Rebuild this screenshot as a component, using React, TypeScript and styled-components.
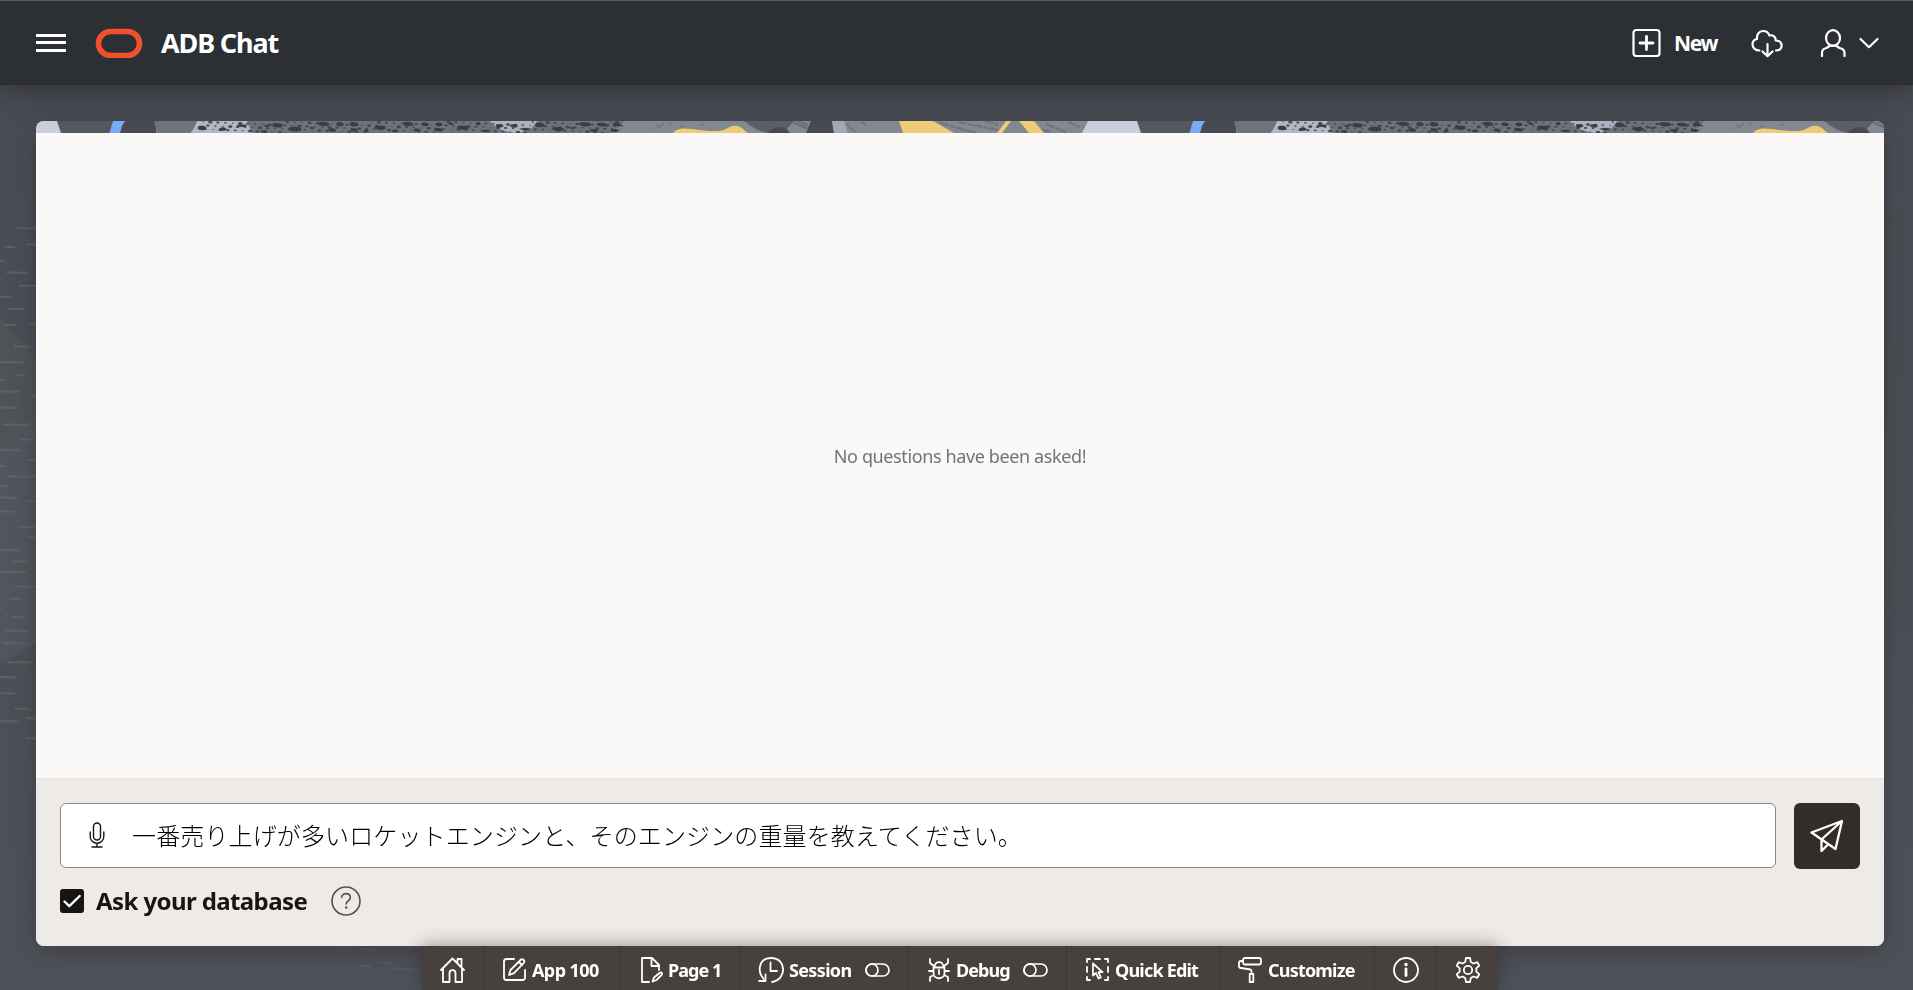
import React from 'react';
import styled, { createGlobalStyle } from 'styled-components';

const GlobalStyle = createGlobalStyle`
  * { box-sizing: border-box; }
  html, body { margin: 0; padding: 0; }
  body {
    font-family: "Noto Sans", "Noto Sans CJK JP", sans-serif;
    background: #4b4e57;
    overflow: hidden;
  }
  button { font: inherit; color: inherit; background: none; border: 0; padding: 0; }
`;

const Page = styled.div`
  position: relative;
  isolation: isolate;
  height: 100vh;
  display: flex;
  flex-direction: column;
  background: linear-gradient(#494b53, #4a4d56 30%, #4e5159);
`;

const Backdrop = styled.svg`
  position: absolute;
  inset: 0;
  z-index: -1;
`;

const Header = styled.header`
  flex: none;
  height: 85px;
  padding: 0 34px 0 36px;
  display: flex;
  align-items: center;
  border-top: 1px solid #565656;
  background: #2c2f33;
  border-bottom: 1px solid #292b2e;
  box-shadow: 0 8px 24px -2px rgba(40, 40, 38, 0.65);
  color: #fff;
`;

const MenuButton = styled.button`
  display: flex;
  flex-direction: column;
  width: 30px;
  height: 18px;
  justify-content: space-between;
`;

const MenuBar = styled.span`
  height: 3px;
  background: #fff;
`;

const Brand = styled.div`
  display: flex;
  align-items: center;
  margin-left: 29px;
  gap: 18px;
  flex: 1;
`;

const Title = styled.h1`
  margin: 0;
  font-size: 27px;
  font-weight: 700;
  letter-spacing: -1.15px;
  line-height: 36px;
`;

const NavButton = styled.button<{ $gap?: number; $after?: number }>`
  display: flex;
  align-items: center;
  gap: ${(p) => p.$gap ?? 0}px;
  margin-right: ${(p) => p.$after ?? 0}px;
`;

const NavLabel = styled.span`
  width: 43px;
  font-size: 21px;
  font-weight: 700;
  letter-spacing: -1.3px;
  line-height: 28px;
  padding-top: 1px;
`;

const Glyph = styled.svg<{ $w?: number }>`
  display: block;
  flex: none;
  fill: none;
  stroke: currentColor;
  stroke-width: ${(p) => p.$w ?? 2.2};
  stroke-linecap: round;
  stroke-linejoin: round;
`;

const Panel = styled.main`
  flex: none;
  height: 825px;
  margin: 36px 29px 0 36px;
  display: flex;
  flex-direction: column;
  border-radius: 8px;
  overflow: hidden;
  background: #fbf9f8;
  box-shadow: 0 6px 24px -2px rgba(48, 45, 40, 0.55);
`;

const Strip = styled.svg`
  display: block;
  flex: none;
`;

const Messages = styled.section`
  flex: 1;
  display: flex;
  align-items: center;
  justify-content: center;
  color: #757371;
  font-size: 18px;
  letter-spacing: -0.38px;
`;

const Composer = styled.form`
  flex: none;
  height: 168px;
  padding: 24px 24px 0;
  border-top: 1px solid #e4e3e1;
  background: #eeeae7;
`;

const InputRow = styled.div`
  display: flex;
  gap: 18px;
  height: 66px;
`;

const Field = styled.div`
  flex: 1;
  height: 65px;
  display: flex;
  align-items: center;
  padding-left: 28px;
  gap: 27px;
  background: #fff;
  border: 1px solid #8b8886;
  border-radius: 6px;
  color: #161513;
`;

const Question = styled.span`
  font-family: "Noto Sans CJK JP", sans-serif;
  font-size: 24px;
  font-weight: 300;
  color: #000;
  letter-spacing: 0.13px;
  white-space: nowrap;
  padding-bottom: 3px;
`;

const SendButton = styled.button`
  width: 66px;
  height: 66px;
  display: flex;
  align-items: center;
  justify-content: center;
  border-radius: 6px;
  background: #312d2a;
  color: #fff;
`;

const OptionRow = styled.div`
  display: flex;
  align-items: center;
  height: 30px;
  margin-top: 17px;
`;

const CheckBox = styled.span`
  width: 24px;
  height: 24px;
  border-radius: 3px;
  background: #161513;
  color: #fff;
`;

const OptionLabel = styled.label`
  width: 247px;
  padding-left: 12px;
  color: #161513;
  font-size: 24px;
  font-weight: 700;
  line-height: 30px;
  white-space: nowrap;
  letter-spacing: -0.6px;
`;

const Help = styled.span`
  color: #55504c;
`;

const DevBar = styled.nav`
  flex: none;
  width: 1076px;
  height: 44px;
  margin-left: 422px;
  display: flex;
  background: #47413d;
  box-shadow: 0 0 18px rgba(30, 28, 25, 0.45);
  color: #fff;
`;

const DevItem = styled.button<{ $width: number; $pad?: number; $gap?: number }>`
  flex: none;
  width: ${(p) => p.$width}px;
  padding-left: ${(p) => p.$pad ?? 18}px;
  padding-top: 3px;
  display: flex;
  align-items: center;
  gap: ${(p) => p.$gap ?? 5}px;
  border-right: 1px solid #3b3633;
  &:last-child { border-right: 0; }
`;

const DevLabel = styled.span<{ $width?: number; $track?: number }>`
  width: ${(p) => (p.$width ? `${p.$width}px` : 'auto')};
  padding-top: 1px;
  font-size: 18px;
  font-weight: 700;
  line-height: 24px;
  text-align: left;
  white-space: nowrap;
  letter-spacing: ${(p) => p.$track ?? -0.95}px;
`;

/* Brush dashes down the left edge: [x1, x2, y]; x in thirds of a pixel, y in steps of 1/2.8 pixel. */
const dashes = [
  [52, 108, 79], [16, 42, 131], [82, 108, 124], [0, 12, 170], [22, 82, 203], [58, 106, 240],
  [0, 32, 271], [24, 70, 304], [10, 44, 349], [93, 108, 348], [44, 88, 410], [0, 68, 454],
  [50, 73, 490], [0, 12, 503], [0, 56, 536], [95, 108, 548], [0, 50, 581], [10, 86, 629],
  [62, 100, 670], [0, 60, 700], [82, 108, 728], [0, 12, 744], [26, 108, 774], [0, 18, 801],
  [0, 50, 833], [84, 108, 843], [0, 42, 872], [58, 108, 916], [82, 108, 943], [0, 62, 980],
  [38, 84, 1012], [0, 76, 1042], [48, 108, 1082], [32, 62, 1117], [0, 5, 1143], [38, 73, 1167],
  [14, 82, 1206], [10, 76, 1241], [26, 94, 1294], [0, 46, 1336], [0, 42, 1381], [46, 86, 1424],
  [80, 108, 1451], [4, 50, 1459], [80, 108, 1507],
];

const lowerDashes = [
  [333, 352, 947], [364, 378, 949], [402, 420, 947], [361, 371, 966], [380, 391, 963], [394, 420, 969],
];

/* Large pebbles of the banner texture: [cx, cy, rx, ry]. */
const pebbles = [
  [202, 7, 4, 2], [223, 8, 3, 1.7], [242, 4.7, 4.5, 1.3], [277.5, 4.3, 5, 2], [295, 8, 6, 2.3],
  [323.5, 3, 5.8, 2], [340, 3.3, 3.5, 2], [354, 3.3, 4.2, 2], [332, 9, 3.5, 1.7], [354, 9, 3.5, 1.6],
  [380, 6.7, 5.4, 2], [408, 3, 5.4, 2], [425, 3.3, 3.5, 1.7], [439, 3.3, 3.5, 1.7], [417, 9, 3.2, 1.4],
  [438.5, 8.7, 4.2, 1.6], [463, 6.7, 5.6, 2], [499.6, 4.7, 3.6, 1.6], [514, 5, 3.6, 1.6], [524.6, 8.3, 3, 1.3],
  [539.6, 4, 4.2, 2], [558, 8, 5.6, 2], [585, 3.3, 5.6, 2], [602, 3.6, 4.8, 1.7], [617, 3.6, 4, 1.6],
  [614.6, 9.6, 3.6, 1.4], [594, 9.6, 3.6, 1.4], [267, 5, 2.4, 1.2], [264, 10.5, 3, 1.3], [312, 7, 2, 1],
  [366, 10, 2.4, 1.1], [395, 10, 3, 1.2], [451, 2.8, 2.4, 1.1], [478, 3, 2.5, 1.1], [485, 10, 3, 1.2], [572, 7, 2, 1],
];

const grit = Array.from({ length: 170 }, (_, i) => [203 + i * 2.48, 0.8 + ((i * 7.31) % 10.8), 0.7 + (i % 4) * 0.32]);

const BannerTile = ({ x }: { x: number }) => (
  <g transform={`translate(${x} 0)`}>
    <rect x="0" width="1082" height="12" fill="#838990" />
    <path d="M55 0H116V12H55Z" fill="#535861" />
    <path d="M2 12 8 0H57L61 12Z" fill="#c8cedb" />
    <path d="M120 0H156V12H114Z" fill="#474a53" />
    <path d="M113 0H125C122 4 121 8 120 12H109.500Z" fill="#79acf7" />
    <path d="M154 0H198V12H157Z" fill="#6e747e" />
    <path d="M197 0H248L253 12H190.500C194 8 195 5 197 0Z" fill="#b0b8c5" />
    <path d="M247 0H625L612 12H252Z" fill="#6d737d" />
    <path d="M490 0H537C534 6 528 11 516 12C503 11 494 6 490 0Z" fill="#abb3c1" />
    {grit.map(([cx, cy, r], i) => <ellipse key={i} cx={cx} cy={cy} rx={r * 1.25} ry={r * 0.8} fill="#44484d" />)}
    {pebbles.map(([cx, cy, rx, ry], i) => <ellipse key={i} cx={cx} cy={cy} rx={rx * 1.08} ry={ry * 1.08} fill="#3b3e42" transform={`rotate(4 ${cx} ${cy})`} />)}
    <path d="M655 8l3-5 2 3 4-4M668 2l4 2M680 5l5 1M700 3l3 1" stroke="#6d727a" strokeWidth="1.200" fill="none" />
    <path d="M673 12C677 7 684 7 692 8C705 10 717 11 724 9C730 6 732 4 738 5C743 7 745 10 748 12Z" fill="#efcb78" />
    <path d="M744 0H794C789 5 786 10 781 12H768C758 10 750 5 744 0Z" fill="#5b5e67" />
    <path d="M768 12C773 5 785 4 790 12Z" fill="#474a53" />
    <path d="M793 1 809 8M798 0 808 4" stroke="#6b7079" strokeWidth="2.500" />
    <path d="M811 0H832L834 12H806Z" fill="#474a53" />
    <path d="M832 0H844L848 12H834Z" fill="#a1a8b6" />
    <path d="M847 3l8 8M861 1l5 3" stroke="#6d727a" strokeWidth="1.500" />
    <path d="M940 2 976 12M958 1 998 9M985 0l13 4M1046 3l20 8M1068 1l12 5M1042 9l8 2" stroke="#70757e" strokeWidth="2.500" strokeDasharray="9 1 5 1" />
    <path d="M899 0H933L954 12H903Z" fill="#efcb78" />
    <path d="M1006 0H1011L1002 12H997ZM1019 0H1034L1044 12H1029Z" fill="#efcb78" />
  </g>
);

const ToggleGlyph = () => (
  <Glyph width="25" height="14" viewBox="0 0 25 14" $w={1.7}>
    <rect x="1" y="1" width="23" height="12" rx="6" /><circle cx="7" cy="7" r="6" />
  </Glyph>
);

export default function App() {
  return (
    <Page>
      <GlobalStyle />
      <Backdrop width="1913" height="990" viewBox="0 0 1913 990">
        <path d="M0 318 36 360V413L0 446Z" fill="#505356" />
        <path d="M0 446 36 413V643L0 664Z" fill="#52555d" />
        <path d="M1884 210H1913V640L1884 600Z" fill="#484b52" opacity="0.500" />
        <path d="M1884 838Q1900 844 1913 844V846Q1900 846 1884 840Z" fill="#4b4d50" opacity="0.600" />
        <g stroke="#64666a" strokeWidth="2.200" strokeLinecap="round" opacity="0.750">
          {dashes.map(([a, b, y], i) => <path key={i} d={`M${a / 3} ${200 + y / 2.8}L${b / 3} ${200.3 + y / 2.8}`} />)}
          {lowerDashes.map(([a, b, y], i) => <path key={i} d={`M${a} ${y}L${b} ${y + 0.5}`} opacity="0.600" />)}
        </g>
      </Backdrop>

      <Header>
        <MenuButton aria-label="Menu"><MenuBar /><MenuBar /><MenuBar /></MenuButton>
        <Brand>
          <Glyph width="48" height="30" viewBox="0 0 48 30" $w={5.6} color="#f1502f">
            <rect x="3.500" y="3.500" width="41" height="24" rx="12" />
          </Glyph>
          <Title>ADB Chat</Title>
        </Brand>
        <NavButton $gap={13} $after={34}>
          <Glyph width="29" height="29" viewBox="0 0 29 29">
            <path d="M4.500 2H24.500Q27.500 2 27.500 5V25Q27.500 28 24.500 28H4.500Q1.500 28 1.500 25V5Q1.500 2 4.500 2Z" />
            <path d="M14.500 8.500v13M8 15h13" strokeWidth="2.800" />
          </Glyph>
          <NavLabel>New</NavLabel>
        </NavButton>
        <NavButton aria-label="Install" $after={36}>
          <Glyph width="32" height="30" viewBox="0 -1 32 30">
            <path d="M8.500 21.500C4 21.500 1.500 18.500 1.500 15.500c0-3 2-5 4.500-5.500C5.500 5.500 8 2 12 2c3 0 5.500 1.800 6.300 4.500 3.700-1 6.700 1.500 6.400 5 3.500 0 6 2 6 5 0 3-2.300 5-5.700 5" />
            <path d="M16.500 15v12M11.500 22.500l5 4.800 5-4.800" />
          </Glyph>
        </NavButton>
        <NavButton aria-label="Account" $gap={12}>
          <Glyph width="28" height="28" viewBox="0 0 28 28">
            <ellipse cx="14" cy="9" rx="7" ry="7.800" />
            <path d="M3 27v-3c0-3 2-4.500 4.500-5L10.500 17l3.500-.5 3.500.5 3 2C23 19.500 25.500 21 25.500 24v3" />
          </Glyph>
          <Glyph width="20" height="12" viewBox="0 0 20 12"><path d="M1.500 2 10 10.200 18.500 2" /></Glyph>
        </NavButton>
      </Header>

      <Panel>
        <Strip width="1848" height="12" viewBox="36 0 1848 12">
          <BannerTile x={0} />
          <BannerTile x={1080} />
        </Strip>
        <Messages>No questions have been asked!</Messages>
        <Composer>
          <InputRow>
            <Field>
              <Glyph width="16" height="27" viewBox="0 0 16 27" $w={1.4}>
                <rect x="4.500" y="1" width="7" height="17" rx="3.500" />
                <path d="M1.200 10v4.500a6.800 6.800 0 0 0 13.600 0V10M8 21.500V25M3 25h10" />
              </Glyph>
              <Question>一番売り上げが多いロケットエンジンと、そのエンジンの重量を教えてください。</Question>
            </Field>
            <SendButton type="button" aria-label="Send">
              <Glyph width="34" height="34" viewBox="0 0 34 34" $w={2.3}>
                <path d="M32 2 1.500 13.500 25.500 30ZM32 2 11.500 20.500V32L18 25.500" />
              </Glyph>
            </SendButton>
          </InputRow>
          <OptionRow>
            <CheckBox>
              <Glyph width="24" height="24" viewBox="0 0 24 24" $w={2.4}><path d="M4.500 12.500 9.300 17.200 19.700 7" /></Glyph>
            </CheckBox>
            <OptionLabel>Ask your database</OptionLabel>
            <Help>
              <Glyph width="30" height="30" viewBox="0 0 30 30" $w={1.6}>
                <circle cx="15" cy="15" r="14" />
                <path d="M10.700 11.500c0-2.400 1.900-3.900 4.400-3.900s4.200 1.600 4.200 3.800c0 3.600-4.100 3.400-4.100 6.600" />
                <circle cx="15.200" cy="21.500" r=".5" />
              </Glyph>
            </Help>
          </OptionRow>
        </Composer>
      </Panel>

      <DevBar>
        <DevItem $width={62} aria-label="Home">
          <Glyph width="25" height="26" viewBox="0 0 25 26" $w={1.8}>
            <path d="M1 13 12.500 1.500 24 13M3 11.500V25h6.500v-9c0-3.800 6-3.800 6 0v9H22V11.500M17.500 6V2h4v8.500" />
          </Glyph>
        </DevItem>
        <DevItem $width={136} $pad={19} $gap={6}>
          <Glyph width="23" height="23" viewBox="0 0 23 23" $w={1.8}>
            <path d="M11 1H3.500Q1 1 1 3.500V19.500Q1 22 3.500 22H19.500Q22 22 22 19.500V12M6 17l1.500-5L17.500 2c2-2 5 1 3.200 3L11 15.200ZM16 4l3 3" />
          </Glyph>
          <DevLabel $track={-0.6}>App 100</DevLabel>
        </DevItem>
        <DevItem $width={121} $pad={21} $gap={5}>
          <Glyph width="22" height="26" viewBox="0 0 22 26" $w={1.8}>
            <path d="M8 25H1V1H11L18 8V13M10.500 1V9H18M11.500 24.500l1.500-4 5.500-4.500c1.800-1.200 3.300.5 2 2L15.500 23Z" />
          </Glyph>
          <DevLabel>Page 1</DevLabel>
        </DevItem>
        <DevItem $width={167} $pad={17}>
          <Glyph width="26" height="26" viewBox="0 0 26 26" $w={1.8}>
            <path d="M7.500 24V17.500M7.500 24H1.200M7 23C-2 15 1 1 13 1c16 0 16 22 1 24M12.500 5.500V14H19" />
          </Glyph>
          <DevLabel $width={71} $track={-0.65}>Session</DevLabel>
          <ToggleGlyph />
        </DevItem>
        <DevItem $width={159} $pad={20} $gap={6}>
          <Glyph width="22" height="24" viewBox="0 0 22 24" $w={1.8}>
            <path d="M5.500 9.500H16.500V15c0 7-11 7-11 0ZM6.500 9c0-6.500 9-6.500 9 0M2 1v4l4 3M20 1v4l-4 3M1 13h4.500M21 13h-4.500M2 23v-4l4-2M20 23v-4l-4-2M11 12v4" />
          </Glyph>
          <DevLabel $width={61}>Debug</DevLabel>
          <ToggleGlyph />
        </DevItem>
        <DevItem $width={153} $pad={19} $gap={6}>
          <Glyph width="23" height="23" viewBox="0 0 23 23" $w={1.8}>
            <path d="M4 1H1V4M9 1h5M19 1h3V4M22 9v5M22 19v3H19M4 22H1V19M1 9v5M7 5.500V17.500L10 15l2.500 5.500 2.300-1-2.300-5.300H16.500Z" />
          </Glyph>
          <DevLabel $track={-0.8}>Quick Edit</DevLabel>
        </DevItem>
        <DevItem $width={155} $pad={18} $gap={6}>
          <Glyph width="24" height="26" viewBox="0 0 24 26" $w={1.8}>
            <rect x="5" y="1" width="18" height="6.500" rx="2" />
            <path d="M5 4H3Q1 4 1 6V9.500Q1 11 3 11l9.500 1.500Q13.500 13 13.500 14V17M11.700 17h3.600v8h-3.600Z" />
          </Glyph>
          <DevLabel $track={-0.8}>Customize</DevLabel>
        </DevItem>
        <DevItem $width={62} aria-label="About">
          <Glyph width="26" height="26" viewBox="0 0 26 26" $w={1.8}>
            <circle cx="13" cy="13" r="12" />
            <path d="M13 12v6.500" strokeWidth="2.800" /><circle cx="13" cy="7.500" r=".8" strokeWidth="2" />
          </Glyph>
        </DevItem>
        <DevItem $width={61} aria-label="Settings">
          <Glyph width="26" height="26" viewBox="0 0 26 26" $w={1.8}>
            <path d="M11 1h4l.8 4 2.700 1.500L22.300 5.200l2 3.500-3 2.700v3.200l3 2.700-2 3.500-3.800-1.300-2.700 1.500-.8 4h-4l-.8-4-2.700-1.500-3.800 1.300-2-3.500 3-2.700v-3.200l-3-2.700 2-3.500 3.800 1.300L10.200 5Z" />
            <circle cx="13" cy="13" r="4.200" />
          </Glyph>
        </DevItem>
      </DevBar>
    </Page>
  );
}
